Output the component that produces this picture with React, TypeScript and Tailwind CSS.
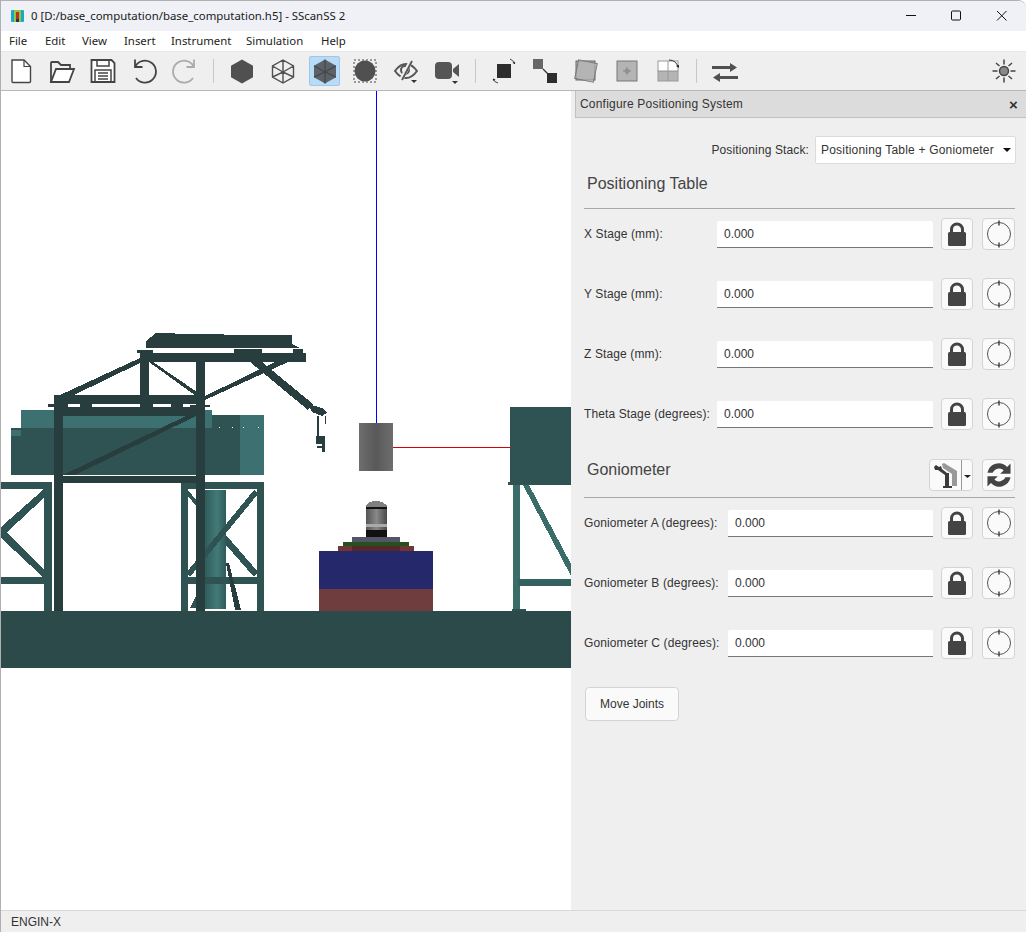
import React from 'react';

const menus = [
  { name: 'File', w: 'w-[36px]' },
  { name: 'Edit', w: 'w-[37px]' },
  { name: 'View', w: 'w-[42px]' },
  { name: 'Insert', w: 'w-[47px]' },
  { name: 'Instrument', w: 'w-[75px]' },
  { name: 'Simulation', w: 'w-[75px]' },
  { name: 'Help', w: 'w-[40px]' },
];

const Icon = ({ children, active }: { children: React.ReactNode; active?: boolean }) => (
  <div className="w-[41px] h-[30px] flex items-center justify-center">
    <div className={`w-[31px] h-[30px] flex items-center justify-center rounded-[2px] ${active ? 'bg-[#b8dcf8] border border-[#9cc8ec] translate-x-px' : ''}`}>
      <svg width="28" height="28" viewBox="0 0 28 28">{children}</svg>
    </div>
  </div>
);

const Sep = () => (
  <div className="w-[16px] flex justify-center">
    <div className="w-px h-[24px] bg-[#c8c8c8]" />
  </div>
);

const Caret = ({ x = 20, y = 24 }: { x?: number; y?: number }) => (
  <path d={`M${x} ${y}h6l-3 3z`} fill="#333" />
);

const Toolbar = () => (
  <div className="h-[38px] bg-[#efefef] flex items-center ml-[-1px]">
    <Icon>
      <path d="M5 3h12l6.500 6.500v15q0 1-1 1H6q-1 0-1-1z" fill="#fff" stroke="#444" strokeWidth="1.400" />
      <path d="M17 3v6.500h6.500" fill="none" stroke="#444" strokeWidth="1.200" />
    </Icon>
    <Icon>
      <path d="M3 25V6q0-1 1-1h6l3 3h9v4" fill="none" stroke="#444" strokeWidth="1.800" />
      <path d="M3 25l5-13h18l-5 13z" fill="#fff" stroke="#444" strokeWidth="1.800" />
    </Icon>
    <Icon>
      <path d="M2.500 3h20l3 3v19h-23z" fill="#fff" stroke="#444" strokeWidth="1.800" />
      <path d="M8 3v6h12V3M6 25V13h16v12M9 16h10M9 19h10M9 22h10" fill="none" stroke="#444" strokeWidth="1.500" />
    </Icon>
    <Icon>
      <path d="M5.500 9A11 11 0 1 1 6 21" fill="none" stroke="#444" strokeWidth="1.800" />
      <path d="M5 2.500V10h7.500" fill="none" stroke="#444" strokeWidth="1.800" />
    </Icon>
    <Icon>
      <path d="M22.500 9A11 11 0 1 0 22 21" fill="none" stroke="#aaa" strokeWidth="1.800" />
      <path d="M23 2.500V10h-7.500" fill="none" stroke="#aaa" strokeWidth="1.800" />
    </Icon>
    <Sep />
    <Icon>
      <path d="M14 2.500l11 6.300v11.400l-11 6.300-11-6.300V8.800z" fill="#505050" />
    </Icon>
    <Icon>
      <path d="M14 3l10.500 6v11L14 26 3.500 20V9z M3.500 9L14 15l10.500-6M14 15v11M3.500 20L14 15l10.500 5M14 3v12" fill="none" stroke="#505050" strokeWidth="1.400" />
    </Icon>
    <Icon active>
      <path d="M14 2.500l11 6.300v11.400l-11 6.300-11-6.300V8.800z" fill="#5c6268" />
      <path d="M3 8.800L14 15l11-6.200M14 15v11.500M3 20.200L14 15l11 5.200M14 2.500V15" fill="none" stroke="#42474c" strokeWidth="1.200" />
    </Icon>
    <Icon>
      <rect x="3" y="3" width="22" height="22" fill="none" stroke="#444" strokeWidth="1" strokeDasharray="2 2" />
      <circle cx="14" cy="14" r="10.500" fill="#505050" />
    </Icon>
    <Icon>
      <path d="M3 14Q8 7 14 7t11 7q-5 7-11 7T3 14z" fill="none" stroke="#555" strokeWidth="2" />
      <circle cx="13" cy="13" r="4" fill="none" stroke="#555" strokeWidth="2" />
      <path d="M19 4L9 23" stroke="#efefef" strokeWidth="4" />
      <path d="M20 4L10 23" stroke="#555" strokeWidth="1.800" />
      <Caret x={19} y={23} />
    </Icon>
    <Icon>
      <rect x="2" y="5" width="17" height="17" rx="4" fill="#555" />
      <path d="M20 12l6-5v13l-6-5z" fill="#555" />
      <Caret x={19} y={24} />
    </Icon>
    <Sep />
    <Icon>
      <rect x="7" y="7" width="14" height="14" fill="#2d2d2d" />
      <path d="M20 2q3 1 5 5M3 22q1 3 5 4" fill="none" stroke="#444" strokeWidth="1" />
      <path d="M25 7l-2.500-1 2-1.500zM3 21.500l2.500 1-2 1.500z" fill="#222" />
    </Icon>
    <Icon>
      <rect x="2" y="2" width="10" height="10" fill="#666" />
      <rect x="16" y="16" width="10" height="10" fill="#2d2d2d" />
      <path d="M12 12l5 5" stroke="#333" strokeWidth="1.200" />
    </Icon>
    <Icon>
      <rect x="4" y="4" width="19" height="19" fill="#b4b4b4" stroke="#666" />
      <rect x="4.500" y="4.500" width="19" height="19" fill="#b4b4b4" fillOpacity="0.6" stroke="#777" transform="rotate(12 14 14)" />
    </Icon>
    <Icon>
      <rect x="4" y="4" width="20" height="20" fill="#b4b4b4" stroke="#777" />
      <path d="M14 10v8M10 14h8" stroke="#888" strokeWidth="1" />
      <circle cx="14" cy="14" r="2" fill="none" stroke="#888" />
    </Icon>
    <Icon>
      <rect x="4" y="14" width="20" height="10" fill="#b4b4b4" stroke="#999" />
      <rect x="4" y="4" width="20" height="10" fill="#fff" stroke="#999" />
      <path d="M14 4v20" stroke="#999" />
      <path d="M15 3q7 0 9 7" fill="none" stroke="#333" />
      <path d="M25 11l-3-2 3-1z" fill="#222" />
    </Icon>
    <Sep />
    <Icon>
      <path d="M1 9h18V6l7 4.500-7 4.500v-3H1z" fill="#505050" />
      <path d="M27 19H9v-3l-7 4.500 7 4.500v-3h18z" fill="#505050" />
    </Icon>
    <div className="flex-1" />
    <div className="w-[28px] h-[28px] mr-[8px]">
      <svg width="28" height="28" viewBox="0 0 28 28">
        <circle cx="14" cy="14" r="4.500" fill="#888" stroke="#444" strokeWidth="1.400" />
        <path d="M14 2.500v5M14 20.500v5M2.500 14h5M20.500 14h5M6 6l3.500 3M18.500 19l3.500 3M22 6l-3.500 3M9.500 19L6 22" stroke="#444" strokeWidth="1.500" />
      </svg>
    </div>
  </div>
);

const Scene = () => (
  <svg className="block w-full h-full" viewBox="1 91 570 819" shapeRendering="crispEdges">
    <defs>
      <linearGradient id="grey" x1="0" x2="1" y1="0" y2="0">
        <stop offset="0" stopColor="#6e6e6e" />
        <stop offset="0.5" stopColor="#595959" />
        <stop offset="1" stopColor="#6e6e6e" />
      </linearGradient>
      <linearGradient id="col" x1="0" x2="1" y1="0" y2="0">
        <stop offset="0" stopColor="#2f5a5a" />
        <stop offset="0.6" stopColor="#427a78" />
        <stop offset="1" stopColor="#2f5a5a" />
      </linearGradient>
      <linearGradient id="can" x1="0" x2="1" y1="0" y2="0">
        <stop offset="0" stopColor="#555" />
        <stop offset="0.5" stopColor="#888" />
        <stop offset="1" stopColor="#4a4a4a" />
      </linearGradient>
    </defs>
    <rect x="376" y="91" width="1" height="332" fill="#0000ff" />
    <rect x="393" y="447" width="118" height="1" fill="#dd0000" />
    <rect x="359" y="423" width="34" height="48" fill="url(#grey)" />

    {/* left support */}
    <g fill="#2f5352">
      <rect x="1" y="482" width="51" height="7" />
      <rect x="44" y="482" width="8" height="129" />
      <rect x="1" y="577" width="44" height="7" />
      <polygon points="44,489 48,494 4,535 1,532 1,527" />
      <polygon points="1,532 4,529 48,574 44,578 1,538" />
    </g>

    {/* right support and column */}
    <rect x="204" y="490" width="22" height="119" fill="url(#col)" />
    <polygon points="190,608 204,580 204,608" fill="#2f5352" />
    <g fill="#2f5352">
      <rect x="181" y="482" width="83" height="7" />
      <rect x="181" y="482" width="7" height="129" />
      <rect x="257" y="482" width="7" height="129" />
      <rect x="181" y="577" width="83" height="7" />
      <polygon points="254,490 258,494 190,577 186,573" />
      <polygon points="226,535 258,572 254,577 226,545" />
      <polygon points="226,563 229,563 241,610 235,610" fill="#283e3e" />
      <polygon points="188,490 196,500 196,506 188,496" />
    </g>

    {/* detector body */}
    <rect x="21" y="410" width="191" height="19" fill="#3d7070" />
    <rect x="11" y="428" width="201" height="47" fill="#2f5352" />
    <rect x="11" y="430" width="10" height="6" fill="#3d7070" />
    <rect x="212" y="415" width="28" height="60" fill="#2f5352" />
    <rect x="240" y="415" width="24" height="60" fill="#3d7070" />
    <rect x="219" y="427" width="1" height="1" fill="#fff" />
    <rect x="232" y="427" width="1" height="1" fill="#fff" />
    <rect x="243" y="427" width="1" height="1" fill="#fff" />
    <rect x="258" y="427" width="1" height="1" fill="#fff" />

    {/* main frame */}
    <g fill="#283e3e">
      <rect x="54" y="395" width="151" height="9" />
      <rect x="54" y="407" width="151" height="9" />
      <rect x="63" y="476" width="134" height="7" />
      <rect x="54" y="407" width="9" height="204" />
      <rect x="196" y="405" width="9" height="206" />
      <polygon points="63,475 186,416 196,416 75,475" />
      <rect x="140" y="353" width="166" height="9" />
      <rect x="140" y="353" width="9" height="43" />
      <rect x="196" y="360" width="9" height="47" />
      <polygon points="60,395 140,358 140,363 74,395" />
      <polygon points="149,362 153,362 197,392 196,396" />
      <polygon points="205,396 275,362 288,362 205,400" />
      <polygon points="250,362 262,362 313,404 308,410" />
      <polygon points="308,404 322,408 327,413 322,416 312,412" />
      <polygon points="146,341 155,334 292,335 292,344 300,348 146,348" />
      <rect x="155" y="333" width="20" height="3" />
      <rect x="137" y="350" width="16" height="3" />
      <rect x="234" y="349" width="28" height="4" />
      <rect x="293" y="349" width="10" height="4" />
      <rect x="48" y="404" width="20" height="3" />
      <rect x="80" y="404" width="12" height="3" />
      <rect x="140" y="404" width="13" height="3" />
      <rect x="171" y="404" width="12" height="3" />
      <rect x="190" y="405" width="20" height="2" />
      <rect x="317" y="416" width="2" height="20" />
      <rect x="325" y="416" width="1" height="8" />
      <rect x="316" y="436" width="9" height="8" />
      <rect x="322" y="444" width="3" height="8" />
      <rect x="317" y="446" width="8" height="2" />
    </g>

    {/* right tower */}
    <g fill="#2f5352">
      <rect x="510" y="407" width="61" height="78" />
      <rect x="508" y="482" width="12" height="3" />
    </g>
    <rect x="513" y="485" width="7" height="126" fill="#3a6c6a" />
    <polygon points="523,485 529,485 571,564 571,576" fill="#3a6c6a" />
    <rect x="518" y="579" width="53" height="7" fill="#356260" />
    <rect x="512" y="609" width="14" height="2" fill="#2f5352" />

    {/* sample stack */}
    <rect x="319" y="551" width="114" height="38" fill="#25286b" />
    <rect x="319" y="589" width="114" height="22" fill="#6f3d3e" />
    <rect x="338" y="546" width="76" height="5" fill="#703535" />
    <rect x="352" y="546" width="48" height="5" fill="#552828" />
    <rect x="343" y="542" width="66" height="4" fill="#25501f" />
    <rect x="352" y="537" width="48" height="5" fill="#55556a" />
    <rect x="366" y="530" width="21" height="7" fill="#111" />
    <rect x="366" y="507" width="21" height="23" fill="url(#can)" />
    <rect x="366" y="507" width="21" height="2" fill="#111" />
    <path d="M366 507v-2l4-3q3-1 6-1t6 1l5 3v2z" fill="#808080" />
    <rect x="366" y="524" width="21" height="3" fill="#aaa" />

    {/* floor */}
    <rect x="0" y="611" width="571" height="57" fill="#2c4a4a" />
  </svg>
);

const Lock = () => (
  <svg width="20" height="24" viewBox="0 0 20 24">
    <path d="M4.500 11V7.500a5.500 5.500 0 0 1 11 0V11" fill="none" stroke="#444" strokeWidth="3" />
    <rect x="1" y="10" width="18" height="14" rx="1.500" fill="#444" />
  </svg>
);

const Ring = () => (
  <svg width="28" height="28" viewBox="0 0 28 28">
    <circle cx="14" cy="14" r="11.500" fill="none" stroke="#555" strokeWidth="1" />
    <path d="M14 0.500v5M14 22.500v5" stroke="#444" strokeWidth="1.500" />
  </svg>
);

const SquareBtn = ({ children, wide }: { children: React.ReactNode; wide?: boolean }) => (
  <button className={`${wide ? 'w-[33px]' : 'w-[32px]'} h-[32px] flex items-center justify-center bg-[#fafafa] border border-[#d4d4d4] rounded-[4px]`}>
    {children}
  </button>
);

const JointRow = ({ label, inputW }: { label: string; inputW: string }) => (
  <div className="h-[60px] flex items-center justify-between pl-[9px] pr-[11px]">
    <span className="text-[#333] tracking-[0.12px]">{label}</span>
    <div className="flex items-center">
      <div className={`${inputW} h-[27px] flex items-center px-[7px] bg-white border-b border-[#777] text-[#333] rounded-t-[2px]`}>
        0.000
      </div>
      <div className="ml-[8px]"><SquareBtn><Lock /></SquareBtn></div>
      <div className="ml-[9px]"><SquareBtn wide><Ring /></SquareBtn></div>
    </div>
  </div>
);

const Panel = () => (
  <div className="w-[455px] pl-[4px] bg-[#efefef] text-[12px] font-['Liberation_Sans',sans-serif] flex flex-col">
    <div className="h-[27px] bg-[#dcdcdc] border-b border-l border-[#c0c0c0] flex items-center justify-between pl-[4px] pr-[8px] text-[#333] tracking-[0.2px]">
      <span>Configure Positioning System</span>
      <span className="text-[15px] font-bold leading-none">×</span>
    </div>
    <div className="flex items-center justify-end mt-[18px] pr-[10px] h-[28px]">
      <span className="text-[#333] mr-[6px] tracking-[0.12px]">Positioning Stack:</span>
      <div className="w-[201px] h-[28px] bg-white border border-[#dcdcdc] rounded-[2px] flex items-center justify-between pl-[5px] pr-[4px] text-[#333] tracking-[0.2px]">
        <span>Positioning Table + Goniometer</span>
        <svg width="8" height="4" viewBox="0 0 8 4"><path d="M0 0h8L4 4z" fill="#111" /></svg>
      </div>
    </div>
    <div className="h-[44px] flex items-center pb-[4px] pl-[12px] text-[16px] text-[#444]">Positioning Table</div>
    <div className="h-px bg-[#a8a8a8] ml-[9px] mr-[11px]" />
    <div className="mt-[-5px]">
      <JointRow label="X Stage (mm):" inputW="w-[216px]" />
      <JointRow label="Y Stage (mm):" inputW="w-[216px]" />
      <JointRow label="Z Stage (mm):" inputW="w-[216px]" />
      <JointRow label="Theta Stage (degrees):" inputW="w-[216px]" />
    </div>
    <div className="h-[32px] flex items-center justify-between mt-[15px] pl-[12px] pr-[11px]">
      <span className="text-[16px] text-[#444] pb-[10px]">Goniometer</span>
      <div className="flex items-center">
        <button className="w-[44px] h-[32px] flex items-center bg-[#fafafa] border border-[#d4d4d4] rounded-[4px]">
          <svg width="42" height="30" viewBox="0 0 42 30">
            <path d="M12 4l2-1 13 8v15h-5V14l-9-6z" fill="#999" />
            <path d="M4 7l2-2 3 2 2-1 1 3 5 4h2v13h3v2h-9v-2h2V15l-7-5-3 0z" fill="#3a3a3a" />
            <path d="M31.500 0v30" stroke="#999" />
            <path d="M34 15h7l-3.500 3z" fill="#222" />
          </svg>
        </button>
        <div className="ml-[9px]">
          <SquareBtn wide>
            <svg width="30" height="30" viewBox="0 0 26 26">
              <path d="M3 11A10 10 0 0 1 20 6l3-3v9h-9l3-3A6 6 0 0 0 7.500 11z" fill="#444" />
              <path d="M23 15A10 10 0 0 1 6 20l-3 3v-9h9l-3 3A6 6 0 0 0 18.500 15z" fill="#444" />
            </svg>
          </SquareBtn>
        </div>
      </div>
    </div>
    <div className="h-px bg-[#a8a8a8] ml-[9px] mr-[11px] mt-[6px]" />
    <div className="mt-[-5px]">
      <JointRow label="Goniometer A (degrees):" inputW="w-[205px]" />
      <JointRow label="Goniometer B (degrees):" inputW="w-[205px]" />
      <JointRow label="Goniometer C (degrees):" inputW="w-[205px]" />
    </div>
    <div className="pl-[10px] mt-[14px]">
      <button className="w-[94px] h-[34px] bg-[#fafafa] border border-[#d4d4d4] rounded-[4px] text-[#333]">Move Joints</button>
    </div>
  </div>
);

export default function App() {
  return (
    <div className="w-[1026px] h-[932px] bg-white flex flex-col overflow-hidden border-l border-t border-[#b0b0b0] rounded-tr-[8px] font-['Noto_Sans',sans-serif]">
      <div className="h-[30px] bg-[#eff1f7] flex items-center text-[11.4px] text-[#1a1a1a]">
        <svg className="ml-[10px] mr-[7px]" width="13" height="14" viewBox="0 0 13 14">
          <rect x="0" y="1" width="13" height="12" rx="1" fill="#1aa7c8" />
          <rect x="3" y="1" width="7" height="12" fill="#8dc63f" />
          <rect x="5" y="3" width="3" height="7" fill="#c8281e" />
          <rect x="5" y="10" width="3" height="3" fill="#223366" />
        </svg>
        <span>0 [D:/base_computation/base_computation.h5] - SScanSS 2</span>
        <div className="flex-1" />
        <svg width="120" height="30" viewBox="0 0 120 30" className="mr-[2px]">
          <path d="M2 14.500h10" stroke="#111" />
          <rect x="47.500" y="10" width="9" height="9" rx="1" fill="none" stroke="#111" />
          <path d="M93 10l9.500 9.500M102.500 10L93 19.500" stroke="#111" />
        </svg>
      </div>
      <div className="h-[21px] bg-white border-b border-[#e8e8e8] flex items-center pl-[8px] text-[11.4px] text-[#222]">
        {menus.map(m => (
          <span key={m.name} className={m.w}>{m.name}</span>
        ))}
      </div>
      <Toolbar />
      <div className="h-px bg-[#b8b8b8]" />
      <div className="flex-1 flex min-h-0">
        <div className="flex-1 min-w-0 bg-white"><Scene /></div>
        <Panel />
      </div>
      <div className="h-[22px] bg-[#efefef] border-t border-[#d8d8d8] flex items-center pl-[10px] text-[12px] text-[#333] font-['Liberation_Sans',sans-serif]">
        ENGIN-X
      </div>
    </div>
  );
}
